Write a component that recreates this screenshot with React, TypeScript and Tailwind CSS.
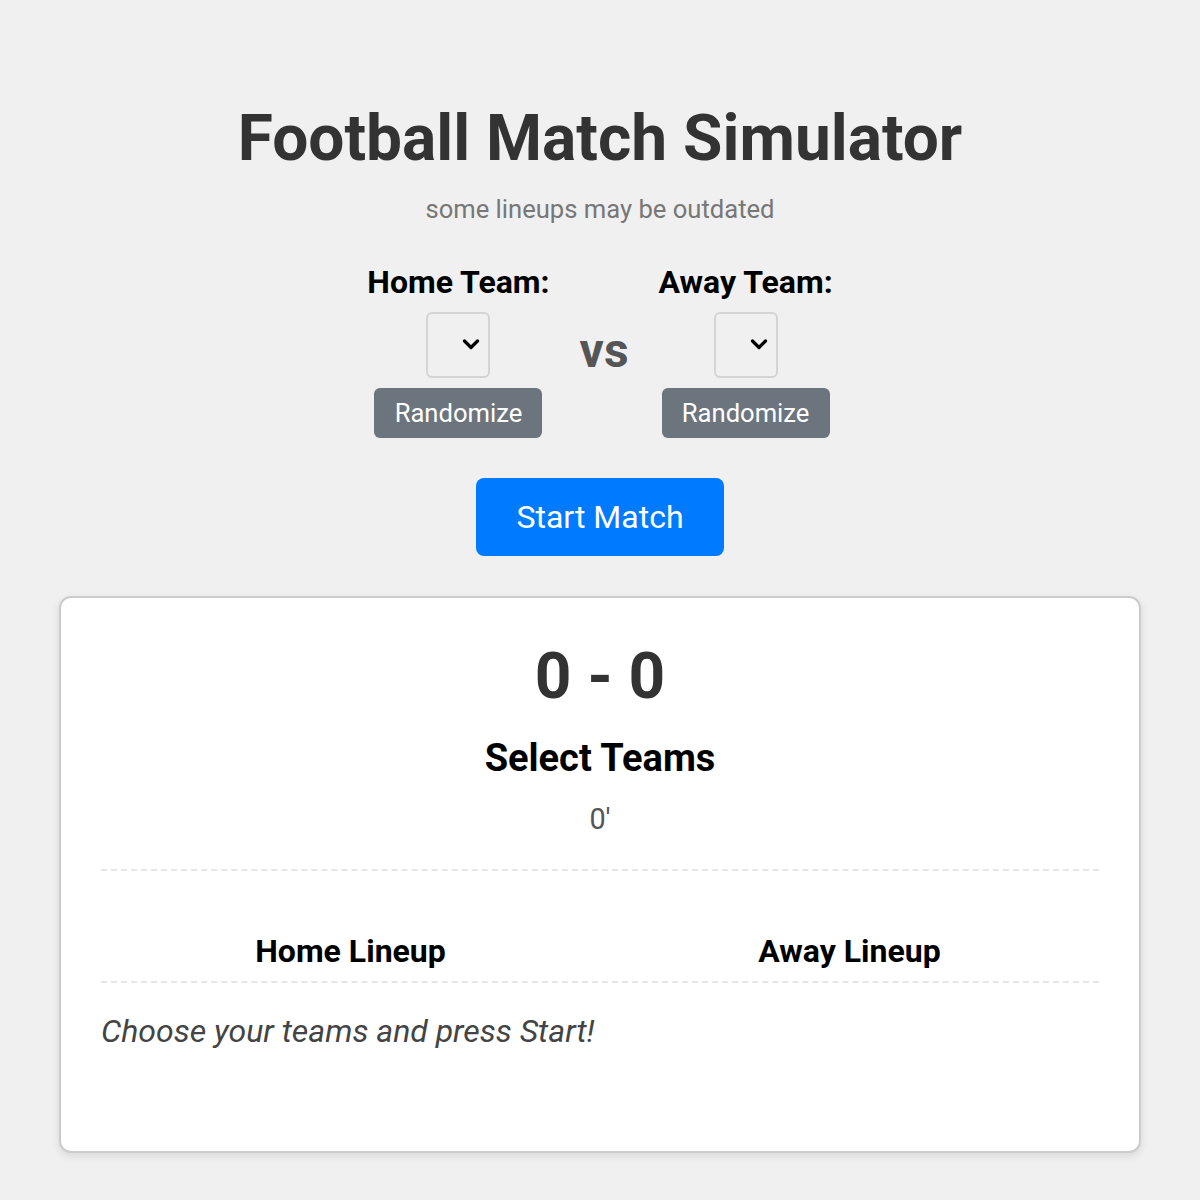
function TeamPicker({ label }: { label: string }) {
  return (
    <div className="flex flex-col items-center">
      <label className="text-[32px] font-bold leading-[37px] text-black">{label}</label>
      <div className="relative mt-[11px] h-[66px] w-[64px]">
        <select
          aria-label={label}
          className="h-full w-full appearance-none rounded-[6px] border-2 border-[#d4d4d4] bg-[#f0f0f0]"
        />
        {/* chevron over the select */}
        <svg
          viewBox="0 0 18 11"
          className="pointer-events-none absolute left-[36px] top-[27px] h-[11px] w-[18px]"
          fill="none"
          stroke="#000"
          strokeWidth={3.2}
          strokeLinecap="round"
          strokeLinejoin="round"
        >
          <polyline points="2.5,2 9,8.5 15.5,2" />
        </svg>
      </div>
      <button className="mt-[10px] h-[50px] w-[168px] rounded-[6px] bg-[#6c757d] text-[25.6px] text-white">
        Randomize
      </button>
    </div>
  );
}

export default function App() {
  return (
    <div className="min-h-screen bg-[#f0f0f0] pt-[101px] font-['Roboto',_'Liberation_Sans',_sans-serif]">
      <h1 className="text-center text-[64px] font-bold leading-[75px] text-[#333]">
        Football Match Simulator
      </h1>
      <p className="mt-[18px] text-center text-[25.6px] leading-[30px] text-[#777]">
        some lineups may be outdated
      </p>

      {/* Team selection */}
      <div className="mt-[40px] flex items-center justify-center gap-[30px]">
        <TeamPicker label="Home Team:" />
        <span className="text-[48px] font-bold leading-[56px] text-[#555]">vs</span>
        <TeamPicker label="Away Team:" />
      </div>

      <div className="mt-[40px] flex justify-center">
        <button className="h-[78px] w-[248px] rounded-[8px] bg-[#007bff] text-[32px] text-white">
          Start Match
        </button>
      </div>

      {/* Scoreboard card */}
      <div className="mx-[59px] mt-[40px] h-[557px] rounded-[12px] border-2 border-[#ccc] bg-white px-[40px] pt-[41px] shadow-[0_3px_8px_rgba(0,0,0,0.1)]">
        <div className="text-center text-[64px] font-bold leading-[75px] text-[#333]">0 - 0</div>
        <div className="mt-[22px] text-center text-[38px] font-bold leading-[44px] text-black">
          Select Teams
        </div>
        <div className="mt-[22px] text-center text-[28.8px] leading-[34px] text-[#555]">0'</div>
        <div className="mt-[33px] border-b-2 border-dashed border-[#e6e6e6]" />

        <div className="mt-[61px] grid grid-cols-2 border-b-2 border-dashed border-[#e6e6e6] pb-[11px]">
          <h3 className="text-center text-[32px] font-bold leading-[38px] text-black">Home Lineup</h3>
          <h3 className="text-center text-[32px] font-bold leading-[38px] text-black">Away Lineup</h3>
        </div>

        <p className="mt-[29px] text-[32px] italic leading-[38px] text-[#444]">
          Choose your teams and press Start!
        </p>
      </div>
      <div className="h-[46px]" />
    </div>
  );
}
